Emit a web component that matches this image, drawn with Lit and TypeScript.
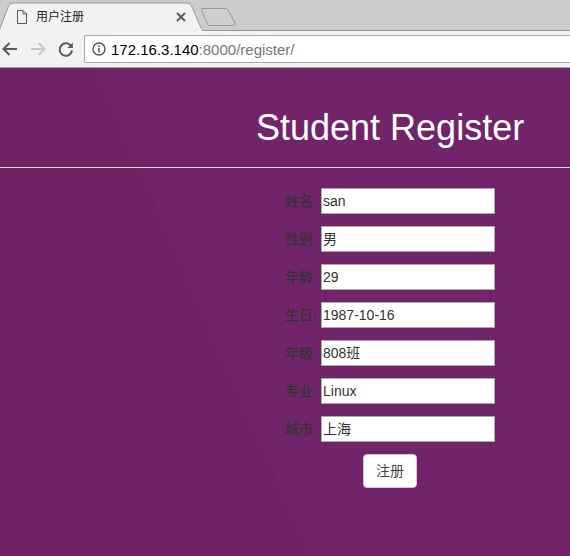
import { html, css, LitElement, svg } from "lit";
import { customElement } from "lit/decorators.js";

const FIELDS = [
  ["姓名", "san"],
  ["性别", "男"],
  ["年龄", "29"],
  ["生日", "1987-10-16"],
  ["年级", "808班"],
  ["专业", "Linux"],
  ["城市", "上海"],
];

@customElement("app-root")
export class AppRoot extends LitElement {
  static styles = css`
    :host {
      display: block;
      width: 570px;
      height: 556px;
      overflow: hidden;
      font-family: "Liberation Sans", "Noto Sans CJK SC", sans-serif;
    }
    .tabstrip {
      position: relative;
      height: 30px;
      background: #cccccc;
      border-bottom: 1px solid #979797;
    }
    .tabshape { position: absolute; left: 0; top: 0; }
    .tab-icon { position: absolute; left: 16px; top: 10px; }
    .tab-title {
      position: absolute;
      left: 36px;
      top: 9px;
      font-size: 12px;
      line-height: 16px;
      color: #222;
    }
    .tab-close { position: absolute; left: 175px; top: 11px; }
    .toolbar {
      height: 36px;
      background: #f2f2f2;
      border-bottom: 1px solid #a0a0a0;
      display: flex;
      align-items: center;
    }
    .nav { display: block; flex: none; }
    .reload { margin-left: 6px; }
    .omnibox {
      flex: 1;
      height: 26px;
      margin-left: 6px;
      background: #fff;
      border: 1px solid #a9a9a9;
      border-right: none;
      border-radius: 2px 0 0 2px;
      display: flex;
      align-items: center;
      padding-left: 7px;
      font-size: 15px;
      color: #000;
      white-space: nowrap;
    }
    .omnibox svg { margin-right: 5px; flex: none; }
    .omnibox span { color: #777; }
    .page {
      height: 488px;
      background: linear-gradient(66.2deg, #6f2365 284px, #72246a 284px);
    }
    header {
      height: 99px;
      border-bottom: 1px solid #e6d9e4;
      padding-left: 256px;
    }
    h1 {
      margin: 0;
      padding-top: 37px;
      font-size: 36px;
      line-height: 46px;
      font-weight: 400;
      color: #fff;
    }
    form {
      display: flex;
      flex-direction: column;
      gap: 12px;
      padding: 20px 0 0 285px;
    }
    .row {
      display: flex;
      align-items: center;
      height: 26px;
    }
    label {
      width: 36px;
      padding-bottom: 2px;
      font-size: 14px;
      font-weight: 500;
      color: #333;
    }
    .value {
      width: 174px;
      height: 26px;
      box-sizing: border-box;
      background: #fff;
      border: 1px solid #a9a9a9;
      padding: 0 1px;
      font-size: 14px;
      line-height: 24px;
      color: #333;
    }
    button {
      align-self: flex-start;
      margin-left: 78px;
      width: 54px;
      height: 34px;
      background: #fff;
      border: 1px solid #ccc;
      border-radius: 4px;
      font: inherit;
      font-size: 14px;
      color: #444;
      padding: 0 0 2px;
    }
  `;

  private tabShape() {
    return html`<svg class="tabshape" width="240" height="31" viewBox="0 0 240 31">
      <path d="M-1 31 L8.5 6 Q10 3 13 3 L187 3 Q190 3 191.5 6 L202.5 31 Z" fill="#f2f2f2" stroke="#999" stroke-width="1"/>
      <path d="M0 30.5 H202" stroke="#f2f2f2" stroke-width="2"/>
      <path d="M201.5 10 Q201 8.5 203 8.5 L225 8.5 Q227 8.5 228 10 L235 23 Q235.5 25.5 233.5 25.5 L210 25.5 Q208 25.5 207.5 24 Z" fill="#cfcfcf" stroke="#999" stroke-width="1"/>
    </svg>`;
  }

  private arrow(color: string, forward: boolean) {
    const d = forward
      ? "M7 12 H20.5 M14.5 6 L20.5 12 L14.5 18"
      : "M17 12 H3.5 M9.5 6 L3.5 12 L9.5 18";
    return html`<svg class="nav" width="24" height="24" viewBox="0 0 24 24" fill="none">
      ${svg`<path d=${d} stroke=${color} stroke-width="2"/>`}
    </svg>`;
  }

  render() {
    return html`
      <div class="tabstrip">
        ${this.tabShape()}
        <svg class="tab-icon" width="12" height="15" viewBox="0 0 12 15" fill="none" stroke="#5a5a5a" stroke-width="1">
          <path d="M1.5 .5 H7 L10.5 4 V13.5 H1.5 Z M7 .5 V4 H10.5"/>
        </svg>
        <span class="tab-title">用户注册</span>
        <svg class="tab-close" width="12" height="12" viewBox="0 0 12 12" stroke="#5a5a5a" stroke-width="2">
          <path d="M2 2 L10 10 M10 2 L2 10"/>
        </svg>
      </div>
      <div class="toolbar">
        ${this.arrow("#5a5a5a", false)} ${this.arrow("#c8c8c8", true)}
        <svg class="nav reload" width="24" height="24" viewBox="0 0 24 24" fill="none">
          ${svg`<path d="M17.3 9.5 A6.2 6.2 0 1 0 18 13.5" stroke="#5a5a5a" stroke-width="2"/>
          <path d="M18.8 5.5 V11 H13.3 Z" fill="#5a5a5a"/>`}
        </svg>
        <div class="omnibox">
          <svg width="14" height="14" viewBox="0 0 14 14" fill="none">
            <circle cx="7" cy="7" r="6" stroke="#555" stroke-width="1.4"/>
            <path d="M7 6 V10.5 M7 3.3 V4.9" stroke="#555" stroke-width="1.5"/>
          </svg>
          172.16.3.140<span>:8000/register/</span>
        </div>
      </div>
      <div class="page">
        <header><h1>Student Register</h1></header>
        <form>
          ${FIELDS.map(
            ([name, value]) => html`<div class="row">
              <label>${name}:</label>
              <div class="value">${value}</div>
            </div>`
          )}
          <button type="button">注册</button>
        </form>
      </div>
    `;
  }
}
